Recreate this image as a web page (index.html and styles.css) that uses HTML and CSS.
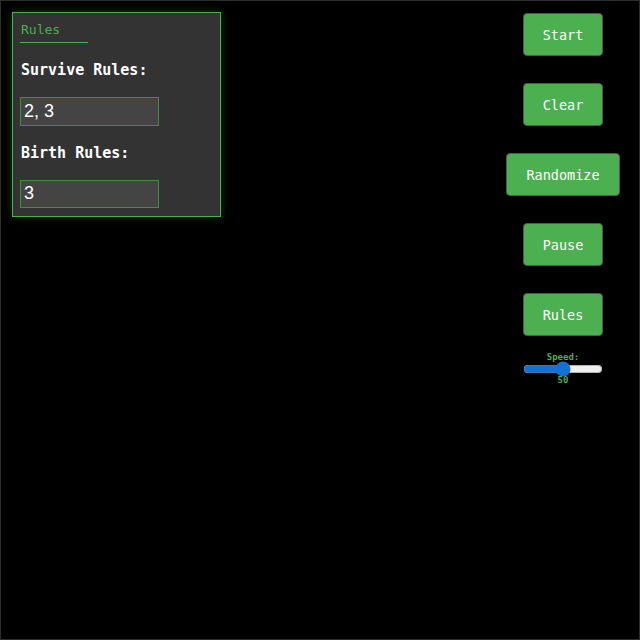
FILE: index.html
```html
<!DOCTYPE html>
<html lang="en">
<head>
    <meta charset="UTF-8">
    <meta name="viewport" content="width=device-width, initial-scale=1.0">
    <title>Game of Life</title>
    <link rel="stylesheet" href="styles.css">
</head>
<body>
    <div class="board">
        <div class="rules-panel">
            <h3 class="panel-title">Rules</h3>
            <label class="rule-label" for="surviveInput">Survive Rules:</label>
            <input class="rule-input" id="surviveInput" type="text" value="2, 3">
            <label class="rule-label" for="birthInput">Birth Rules:</label>
            <input class="rule-input" id="birthInput" type="text" value="3">
        </div>

        <div class="controls">
            <button class="btn">Start</button>
            <button class="btn">Clear</button>
            <button class="btn">Randomize</button>
            <button class="btn">Pause</button>
            <button class="btn">Rules</button>
            <div class="speed">
                <label for="speed">Speed:</label>
                <input id="speed" type="range" min="1" max="99" value="50">
                <span>50</span>
            </div>
        </div>
    </div>
</body>
</html>
```

FILE: styles.css
```css
:root {
    --green: #4caf50;
    --dim-green: #3f8f43;
    --panel-bg: #333333;
    --input-bg: #444444;
}

* {
    margin: 0;
    padding: 0;
    box-sizing: border-box;
}

body {
    background: #000;
    font-family: "DejaVu Sans Mono", "Liberation Mono", monospace;
    color: #fff;
}

.board {
    width: 640px;
    height: 640px;
    border: 1px solid #2e2e2e;
    display: flex;
    justify-content: space-between;
    align-items: flex-start;
    padding: 11px 19px 0 11px;
}

.rules-panel {
    width: 209px;
    height: 205px;
    background: var(--panel-bg);
    border: 1px solid var(--green);
    box-shadow: 0 0 8px rgba(76, 175, 80, 0.35);
    padding: 8px 7px;
    display: flex;
    flex-direction: column;
    align-items: flex-start;
}

.panel-title {
    width: 68px;
    font-size: 13px;
    font-weight: normal;
    color: var(--green);
    line-height: 17px;
    padding-left: 1px;
    padding-bottom: 4px;
    border-bottom: 1px solid var(--green);
}

.rule-label {
    font-size: 15px;
    font-weight: bold;
    line-height: 18px;
    margin: 18px 0 18px 1px;
}

.rule-input {
    width: 139px;
    height: 29px;
    background: var(--input-bg);
    border: 1px solid var(--dim-green);
    color: #fff;
    font-family: "Liberation Sans", Arial, sans-serif;
    font-size: 18px;
    padding: 0 3px;
    outline: none;
}

.controls {
    width: 114px;
    margin-top: 1px;
    display: flex;
    flex-direction: column;
    align-items: center;
    gap: 27px;
}

.btn {
    background: var(--green);
    color: #fff;
    border: 1px solid #555;
    border-radius: 4px;
    padding: 13px 19px 11px;
    font-family: inherit;
    font-size: 13.5px;
    line-height: 17px;
    cursor: pointer;
}

.btn:hover {
    background: #45a049;
}

.speed {
    margin-top: -11px;
    display: flex;
    flex-direction: column;
    align-items: center;
    color: var(--green);
    font-size: 9px;
    font-weight: bold;
    line-height: 11px;
}

.speed input {
    width: 80px;
    height: 12px;
    margin: 0;
    accent-color: #1172d4;
}
```
